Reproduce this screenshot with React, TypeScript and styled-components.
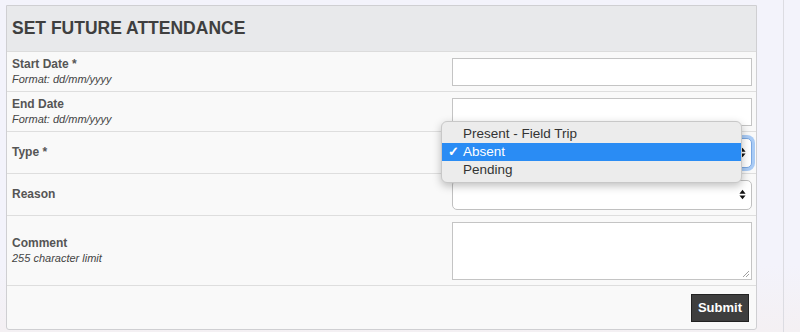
import React from 'react';
import styled, { createGlobalStyle } from 'styled-components';

const GlobalStyle = createGlobalStyle`
  html, body {
    margin: 0;
    padding: 0;
    background: #f3f3fb;
    font-family: "Liberation Sans", Arial, sans-serif;
  }
`;

/* 1項目分の行 ------------- */
interface FieldRowProps {
  label: string;
  hint?: string;
  height: number;
  children?: React.ReactNode;
}

const FieldRow: React.FC<FieldRowProps> = ({ label, hint, height, children }) => (
  <Row $height={height}>
    <LabelBox>
      <Label>{label}</Label>
      {hint && <Hint>{hint}</Hint>}
    </LabelBox>
    <FieldCell>{children}</FieldCell>
  </Row>
);
/* ------------- */

const SelectArrows: React.FC = () => (
  <Arrows viewBox="0 0 8 12">
    <path d="M4 0.5 L7.5 5 H0.5 Z" fill="#111" />
    <path d="M4 11.5 L7.5 7 H0.5 Z" fill="#111" />
  </Arrows>
);

const typeOptions = ['Present - Field Trip', 'Absent', 'Pending'];

const App: React.FC = () => (
  <>
    <GlobalStyle />
    <Page>
      <Panel>
        <Header>
          <Title>SET FUTURE ATTENDANCE</Title>
        </Header>
        <FieldRow label="Start Date *" hint="Format: dd/mm/yyyy" height={39}>
          <TextInput />
        </FieldRow>
        <FieldRow label="End Date" hint="Format: dd/mm/yyyy" height={39}>
          <TextInput />
        </FieldRow>
        <FieldRow label="Type *" height={41}>
          <SelectBox $focused>
            <SelectArrows />
          </SelectBox>
          <Menu>
            {typeOptions.map((opt) => (
              <MenuItem key={opt} $selected={opt === 'Absent'}>
                <Check>{opt === 'Absent' ? '✓' : ''}</Check>
                {opt}
              </MenuItem>
            ))}
          </Menu>
        </FieldRow>
        <FieldRow label="Reason" height={41}>
          <SelectBox>
            <SelectArrows />
          </SelectBox>
        </FieldRow>
        <FieldRow label="Comment" hint="255 character limit" height={69}>
          <TextArea>
            <Grip viewBox="0 0 8 8">
              <path d="M1 7 L7 1 M4 7 L7 4" stroke="#888" strokeWidth="0.8" />
            </Grip>
          </TextArea>
        </FieldRow>
        <Footer>
          <SubmitButton>Submit</SubmitButton>
        </Footer>
      </Panel>
      <SideRule />
    </Page>
  </>
);

const Page = styled.div`
  display: flex;
  align-items: flex-start;
  height: 332px;
  padding: 5px 0 0 6px;
  box-sizing: border-box;
  overflow: hidden;
  background: linear-gradient(180deg, #f3f3fb 0%, #f3f3fb 80%, #f4f0f3 100%);
`;
const Panel = styled.div`
  width: 751px;
  border: 1px solid #cfcfd2;
  border-radius: 0 0 3px 3px;
  background: #f9f9f9;
  box-sizing: border-box;
`;
const SideRule = styled.div`
  width: 1px;
  height: 332px;
  margin: -5px 0 0 26px;
  background: #dcdce2;
`;
const Header = styled.div`
  height: 45px;
  display: flex;
  align-items: center;
  padding: 0 5px;
  background: #e8e9eb;
  border-bottom: 1px solid #dcdcdc;
`;
const Title = styled.h2`
  margin: 0;
  font-size: 17.5px;
  font-weight: bold;
  color: #3f3f3f;
`;
const Row = styled.div<{ $height: number }>`
  height: ${(p) => p.$height}px;
  display: flex;
  align-items: center;
  justify-content: space-between;
  padding: 0 4px 0 5px;
  border-bottom: 1px solid #dedede;
`;
const LabelBox = styled.div`
  display: flex;
  flex-direction: column;
`;
const Label = styled.span`
  font-size: 12px;
  font-weight: bold;
  color: #555;
  line-height: 15px;
`;
const Hint = styled.span`
  font-size: 11px;
  font-style: italic;
  color: #444;
  line-height: 14px;
`;
const FieldCell = styled.div`
  position: relative;
  width: 300px;
`;
const TextInput = styled.div`
  height: 28px;
  border: 1px solid #c4c4c4;
  background: #fff;
  box-sizing: border-box;
`;
const SelectBox = styled.div<{ $focused?: boolean }>`
  height: 30px;
  display: flex;
  align-items: center;
  justify-content: flex-end;
  padding-right: 5px;
  border: 1px solid ${(p) => (p.$focused ? '#7aa7e0' : '#c0c0c0')};
  border-radius: 5px;
  background: #fff;
  box-sizing: border-box;
  box-shadow: ${(p) => (p.$focused ? '0 0 0 3px #a9cbf5' : 'none')};
`;
const Arrows = styled.svg`
  width: 7px;
  height: 11px;
`;
const Menu = styled.ul`
  position: absolute;
  left: -11px;
  top: -17px;
  width: 301px;
  margin: 0;
  padding: 3px 0;
  list-style: none;
  background: #ececec;
  border: 1px solid #c8c8c8;
  border-radius: 6px;
  box-shadow: 0 3px 8px rgba(0, 0, 0, 0.25);
  box-sizing: border-box;
  z-index: 2;
`;
const MenuItem = styled.li<{ $selected?: boolean }>`
  display: flex;
  align-items: center;
  height: 18px;
  font-size: 13.5px;
  color: ${(p) => (p.$selected ? '#fff' : '#333')};
  background: ${(p) => (p.$selected ? '#2a8cf4' : 'transparent')};
`;
const Check = styled.span`
  width: 21px;
  padding-left: 6px;
  box-sizing: border-box;
  font-size: 13px;
  font-weight: bold;
`;
const TextArea = styled.div`
  position: relative;
  height: 58px;
  border: 1px solid #c4c4c4;
  background: #fff;
  box-sizing: border-box;
`;
const Grip = styled.svg`
  position: absolute;
  right: 1px;
  bottom: 1px;
  width: 8px;
  height: 8px;
`;
const Footer = styled.div`
  height: 43px;
  display: flex;
  align-items: center;
  justify-content: flex-end;
  padding-right: 7px;
`;
const SubmitButton = styled.button`
  height: 28px;
  padding: 0 6px;
  border: 1px solid #222;
  background: #3e3e3e;
  color: #fff;
  font-family: "Liberation Sans", Arial, sans-serif;
  font-size: 13px;
  font-weight: bold;
`;

export default App;
